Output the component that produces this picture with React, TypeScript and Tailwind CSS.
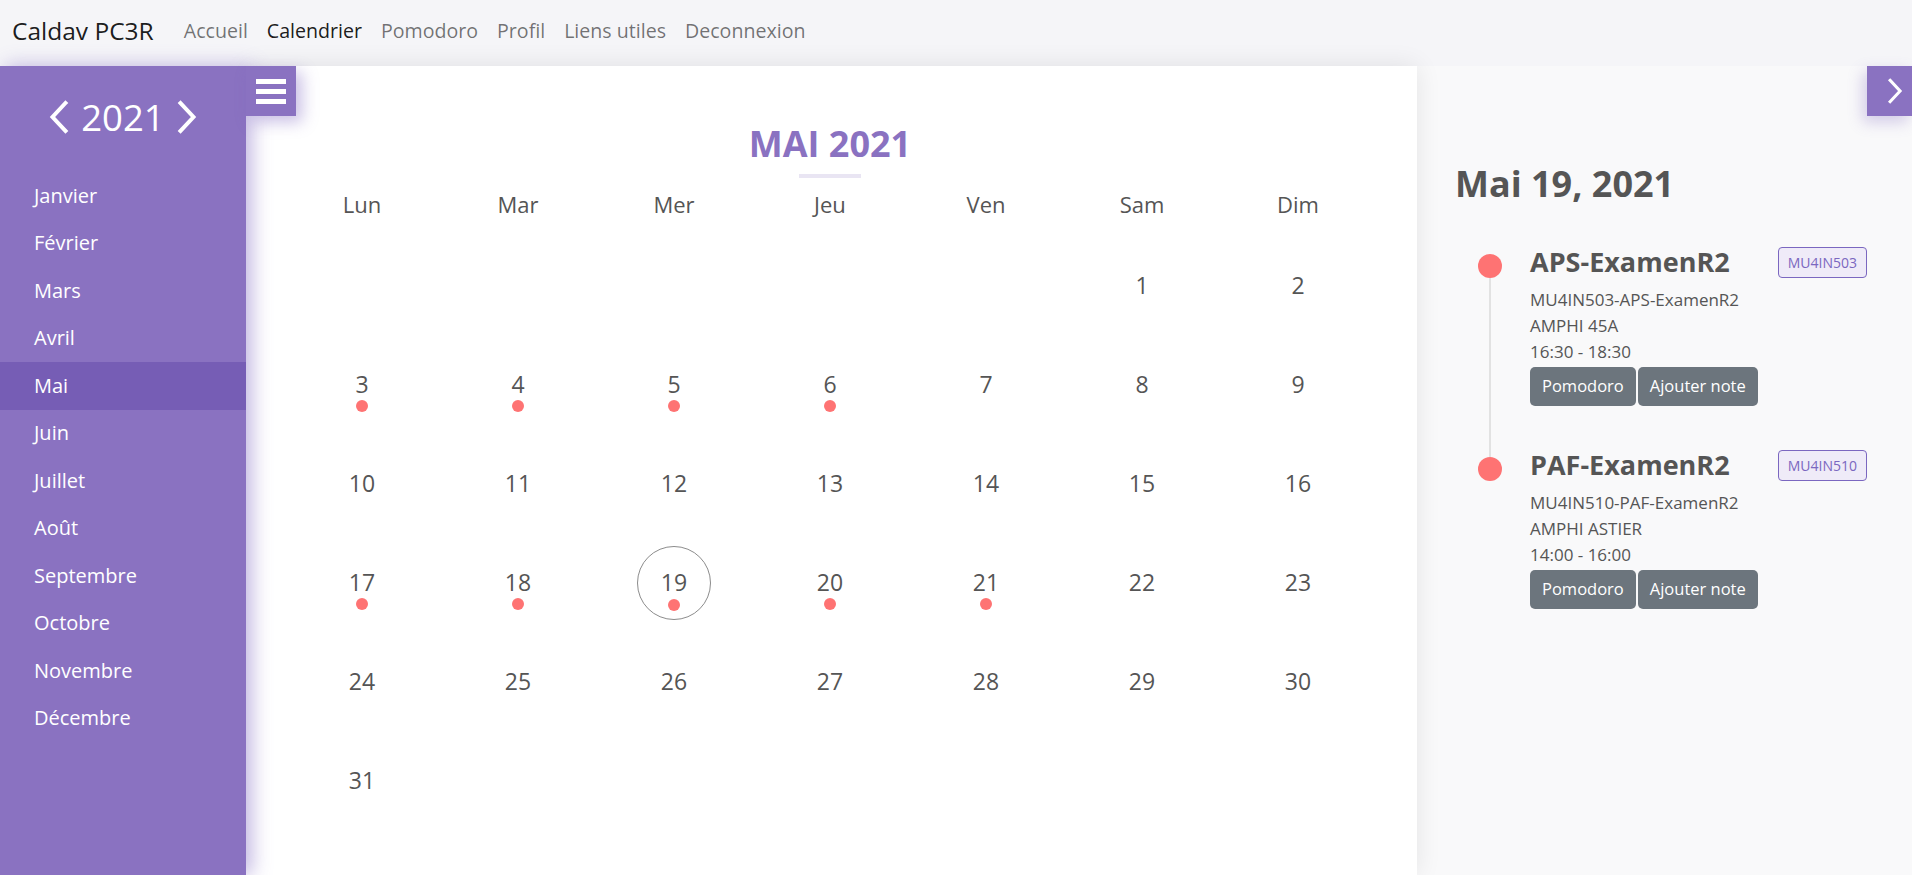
import React from 'react';

const months = [
  'Janvier', 'Février', 'Mars', 'Avril', 'Mai', 'Juin',
  'Juillet', 'Août', 'Septembre', 'Octobre', 'Novembre', 'Décembre',
];
const weekdays = ['Lun', 'Mar', 'Mer', 'Jeu', 'Ven', 'Sam', 'Dim'];
const eventDays = [3, 4, 5, 6, 17, 18, 19, 20, 21];

const events = [
  { title: 'APS-ExamenR2', code: 'MU4IN503', full: 'MU4IN503-APS-ExamenR2', room: 'AMPHI 45A', time: '16:30 - 18:30' },
  { title: 'PAF-ExamenR2', code: 'MU4IN510', full: 'MU4IN510-PAF-ExamenR2', room: 'AMPHI ASTIER', time: '14:00 - 16:00' },
];

const Chevron: React.FC<{ dir: 'left' | 'right'; className?: string }> = ({ dir, className }) => (
  <svg className={className} viewBox="0 0 20 34" fill="none" stroke="white" strokeWidth={4} strokeLinecap="square">
    {dir === 'left' ? <polyline points="17,3 4,17 17,31" /> : <polyline points="3,3 16,17 3,31" />}
  </svg>
);

const App: React.FC = () => {
  const cells: (number | null)[] = [...Array(5).fill(null), ...Array.from({ length: 31 }, (_, i) => i + 1)];
  while (cells.length % 7 !== 0) cells.push(null);

  return (
    <div className="w-full h-[875px] flex flex-col overflow-hidden" style={{ fontFamily: '"Open Sans", sans-serif' }}>
      <nav className="h-[66px] shrink-0 flex items-center bg-[#f5f5f8] pl-[12px] pb-[4px]">
        <span className="text-[24.5px] text-black/90 mr-[30px]">Caldav PC3R</span>
        <div className="flex items-center gap-[19px] text-[19.6px] text-black/55">
          <span>Accueil</span>
          <span className="text-black/90">Calendrier</span>
          <span>Pomodoro</span>
          <span>Profil</span>
          <span>Liens utiles</span>
          <span>Deconnexion</span>
        </div>
      </nav>

      <div className="flex flex-1 min-h-0">
        <aside className="relative z-30 w-[246px] shrink-0 bg-[#8a72c1] text-white shadow-[6px_0_18px_rgba(120,96,190,0.45)]">
          <div className="h-[106px] flex items-center justify-center gap-[12px] pb-[4px]">
            <Chevron dir="left" className="w-[21px] h-[34px]" />
            <span className="text-[36.5px] leading-none">2021</span>
            <Chevron dir="right" className="w-[21px] h-[34px]" />
          </div>
          <ul>
            {months.map((m) => (
              <li
                key={m}
                className={`h-[47.5px] flex items-center pl-[34px] text-[20px] ${m === 'Mai' ? 'bg-[#765db5]' : ''}`}
              >
                {m}
              </li>
            ))}
          </ul>
          <div className="absolute left-full top-0 w-[50px] h-[50px] bg-[#8a72c1] flex flex-col items-center justify-center gap-[5px] shadow-[6px_6px_16px_rgba(120,96,190,0.4)]">
            <span className="block w-[30px] h-[5px] bg-white" />
            <span className="block w-[30px] h-[5px] bg-white" />
            <span className="block w-[30px] h-[5px] bg-white" />
          </div>
        </aside>

        <main className="relative z-20 w-[1171px] shrink-0 bg-white shadow-[0_0_24px_rgba(0,0,0,0.09)] pt-[56px] pl-[38px]">
          <div className="w-[1092px] flex flex-col items-center">
            <h2 className="text-[36px] leading-[43px] font-bold text-[#8a72c1]">MAI 2021</h2>
            <div className="mt-[9px] w-[62px] h-[4px] bg-[#e9e5f3]" />
          </div>
          <div className="w-[1092px] grid grid-cols-7 mt-[10px]">
            {weekdays.map((d) => (
              <div key={d} className="h-[32px] flex items-center justify-center text-[22px] text-[#555]">
                {d}
              </div>
            ))}
          </div>
          <div className="w-[1092px] grid grid-cols-7 mt-[16px]">
            {cells.map((d, i) => (
              <div key={i} className="h-[99px] flex items-center justify-center">
                {d !== null && (
                  <div
                    className={`relative w-[74px] h-[74px] rounded-full flex items-center justify-center text-[23px] text-[#555] ${
                      d === 19 ? 'border border-[#8c8c8c]' : ''
                    }`}
                  >
                    <span className="leading-none">{d}</span>
                    {eventDays.includes(d) && (
                      <span className="absolute left-1/2 top-[52px] -ml-[6px] w-[12px] h-[12px] rounded-full bg-[#fe7373]" />
                    )}
                  </div>
                )}
              </div>
            ))}
          </div>
        </main>

        <section className="relative z-10 flex-1 bg-[#f9f9fa] pl-[38px] pt-[96px]">
          <div className="absolute right-0 top-0 w-[45px] h-[50px] bg-[#8a72c1] flex items-center pl-[20px] shadow-[-4px_6px_14px_rgba(120,96,190,0.3)]">
            <Chevron dir="right" className="w-[17px] h-[26px]" />
          </div>
          <h1 className="text-[36px] leading-[43px] font-bold text-[#555]">Mai 19, 2021</h1>
          <div className="mt-[39px] pl-[11px]">
            {events.map((ev, i) => (
              <div key={ev.code} className="flex">
                <div className="w-[48px] flex flex-col items-center">
                  <span className={`w-[2px] h-[10px] ${i > 0 ? 'bg-[#e2e2e2]' : ''}`} />
                  <span className="w-[24px] h-[24px] rounded-full bg-[#fe7373]" />
                  {i < events.length - 1 && <span className="w-[2px] flex-1 bg-[#e2e2e2]" />}
                </div>
                <div className={`ml-[16px] w-[337px] ${i < events.length - 1 ? 'pb-[41px]' : ''}`}>
                  <div className="flex items-center justify-between h-[36px]">
                    <span className="text-[27px] font-bold text-[#555]">{ev.title}</span>
                    <span className="h-[31px] px-[9px] flex items-center rounded-[4px] border border-[#7b67c0] bg-[#efebf8] text-[14px] text-[#7b67c0]">
                      {ev.code}
                    </span>
                  </div>
                  <div className="mt-[7px] text-[17px] leading-[26px] text-[#555]">
                    <div>{ev.full}</div>
                    <div>{ev.room}</div>
                    <div>{ev.time}</div>
                  </div>
                  <div className="mt-[2px] flex gap-[2px]">
                    <button className="h-[39px] px-[12px] rounded-[5px] bg-[#6c757d] text-white text-[16.5px]">Pomodoro</button>
                    <button className="h-[39px] px-[12px] rounded-[5px] bg-[#6c757d] text-white text-[16.5px]">Ajouter note</button>
                  </div>
                </div>
              </div>
            ))}
          </div>
        </section>
      </div>
    </div>
  );
};

export default App;
